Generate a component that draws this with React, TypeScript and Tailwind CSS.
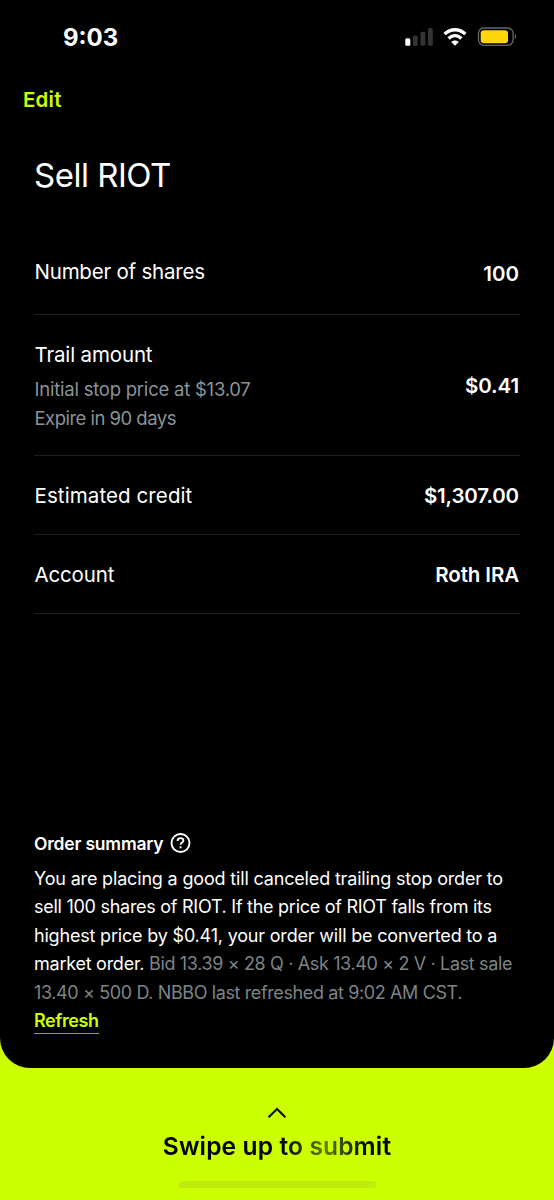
import React from 'react';

const StatusIcons: React.FC = () => (
  <svg width="112" height="22" viewBox="0 0 112 22" fill="none">
    <rect x="0.3" y="11.3" width="5" height="7.5" rx="1.5" fill="#fff" />
    <rect x="8" y="8.5" width="4.8" height="10.3" rx="1.5" fill="#333" />
    <rect x="15.5" y="4.8" width="4.8" height="14" rx="1.5" fill="#333" />
    <rect x="23" y="1" width="4.8" height="17.8" rx="1.5" fill="#333" />
    <path d="M39.6 7.1C45.6 1.3 54.4 1.3 60.4 7.1" stroke="#fff" strokeWidth="3.4" />
    <path d="M43.6 11.4C47.4 7.8 52.6 7.8 56.4 11.4" stroke="#fff" strokeWidth="3.4" />
    <path d="M50 18.8L46.2 15C48.3 13 51.7 13 53.8 15Z" fill="#fff" />
    <rect x="73.5" y="1" width="34.6" height="17.4" rx="5.4" stroke="#66676b" strokeWidth="1.3" />
    <rect x="75.7" y="3.3" width="27.3" height="12.9" rx="3.2" fill="#ffd60a" />
    <path d="M109.8 7C111.6 7.8 111.6 11.6 109.8 12.4Z" fill="#66676b" />
  </svg>
);

interface SummaryRowProps {
  label: string;
  value: string;
  className: string;
  labelClass: string;
  valueClass: string;
  details?: { text: string; className: string }[];
}

const SummaryRow: React.FC<SummaryRowProps> = ({ label, value, className, labelClass, valueClass, details }) => (
  <div className={`flex justify-between border-b border-[#1e1e1e] pr-px pl-[0.5px] ${className}`}>
    <div>
      <p className={`text-[20.5px] leading-7 ${labelClass}`}>{label}</p>
      {details && (
        <div className="mt-[6px] text-[18.5px] leading-[29px] text-[#8a9499]">
          {details.map((detail) => (
            <p key={detail.text} className={detail.className}>{detail.text}</p>
          ))}
        </div>
      )}
    </div>
    <p className={`text-[20.5px] leading-7 font-semibold ${valueClass}`}>{value}</p>
  </div>
);

const OrderSummary: React.FC = () => (
  <section className="mt-[216px]">
    <div className="flex h-7 items-center gap-[7px]">
      <h2 className="text-[17.5px] leading-7 font-semibold tracking-[-0.2px]">Order summary</h2>
      <svg className="mb-[2px]" width="22" height="22" viewBox="0 0 22 22" fill="none" stroke="#fff" strokeWidth="1.9">
        <circle cx="10.5" cy="11" r="9" />
        <path d="M7.6 8.9C7.6 7.1 8.8 6.1 10.5 6.1C12.2 6.1 13.4 7.1 13.4 8.6C13.4 10.5 10.6 10.5 10.6 12.8" />
        <path d="M10.6 14.3V16.3" />
      </svg>
    </div>
    <div className="mt-[6.5px] text-[18px] leading-[28.5px] whitespace-nowrap">
      <p className="tracking-[-0.17px]">You are placing a good till canceled trailing stop order to</p>
      <p className="tracking-[-0.27px]">sell 100 shares of RIOT. If the price of RIOT falls from its</p>
      <p className="tracking-[-0.19px]">highest price by $0.41, your order will be converted to a</p>
      <p className="tracking-[-0.25px]">
        market order.{' '}
        <span className="tracking-[-0.36px] text-[#7c8488]">Bid 13.39 × 28 Q · Ask 13.40 × 2 V · Last sale</span>
      </p>
      <p className="tracking-[-0.38px] text-[#7c8488]">13.40 × 500 D. NBBO last refreshed at 9:02 AM CST.</p>
      <button className="block h-[27px] border-b border-[#ccff00]/70 leading-[28px] font-semibold tracking-[-0.4px] text-[#ccff00]">
        Refresh
      </button>
    </div>
  </section>
);

const SwipeToSubmit: React.FC = () => (
  <footer className="flex h-[132px] flex-col items-center pt-[39px]">
    <svg width="20" height="12" viewBox="0 0 20 12" fill="none" stroke="#0b1000" strokeWidth="2.2">
      <path d="M1.6 10.2L10 2L18.4 10.2" />
    </svg>
    <p className="mt-[11px] h-8 bg-linear-to-r from-black from-48% via-[#667f00] via-71% to-black to-95% bg-clip-text text-[24.5px] leading-8 font-semibold tracking-[0.15px] whitespace-nowrap text-transparent">
      Swipe up to submit
    </p>
    <div className="mt-[19px] h-[7px] w-[197px] rounded-full bg-[#bfec0d]" />
  </footer>
);

const App: React.FC = () => (
  <div className="h-[1200px] w-[554px] overflow-hidden bg-[#ccff00] font-['Inter','Liberation_Sans',sans-serif] text-white">
    <main className="h-[1068px] rounded-b-[30px] bg-black">
      <header className="flex h-[75px] items-start justify-between pt-[22px] pr-[37px] pl-[63px]">
        <span className="text-[24px] leading-8 font-bold">9:03</span>
        <div className="mt-[5px]">
          <StatusIcons />
        </div>
      </header>
      <button className="ml-[23px] block h-[49px] text-[20.5px] leading-[49px] font-semibold tracking-[0.2px]">
        <span className="text-[#ccff00]">Edit</span>
      </button>
      <div className="px-[34px]">
        <h1 className="mt-[29px] text-[33px] leading-[44px] tracking-[-0.5px]">Sell RIOT</h1>
        <div className="mt-[61px]">
          <SummaryRow
            className="h-[57px]"
            label="Number of shares"
            value="100"
            labelClass="tracking-[-0.22px]"
            valueClass="mt-[2px]"
          />
          <SummaryRow
            className="h-[141px] pt-[26px]"
            label="Trail amount"
            value="$0.41"
            labelClass="tracking-[-0.15px]"
            valueClass="mt-[31px] tracking-[-0.1px]"
            details={[
              { text: 'Initial stop price at $13.07', className: 'tracking-[-0.23px]' },
              { text: 'Expire in 90 days', className: 'tracking-[-0.52px]' },
            ]}
          />
          <SummaryRow
            className="h-[79px] pt-[26px]"
            label="Estimated credit"
            value="$1,307.00"
            labelClass="tracking-[0.1px]"
            valueClass="tracking-[-0.15px]"
          />
          <SummaryRow
            className="h-[79px] pt-[26px]"
            label="Account"
            value="Roth IRA"
            labelClass="tracking-[-0.15px]"
            valueClass="tracking-[-0.1px]"
          />
        </div>
        <OrderSummary />
      </div>
    </main>
    <SwipeToSubmit />
  </div>
);

export default App;
